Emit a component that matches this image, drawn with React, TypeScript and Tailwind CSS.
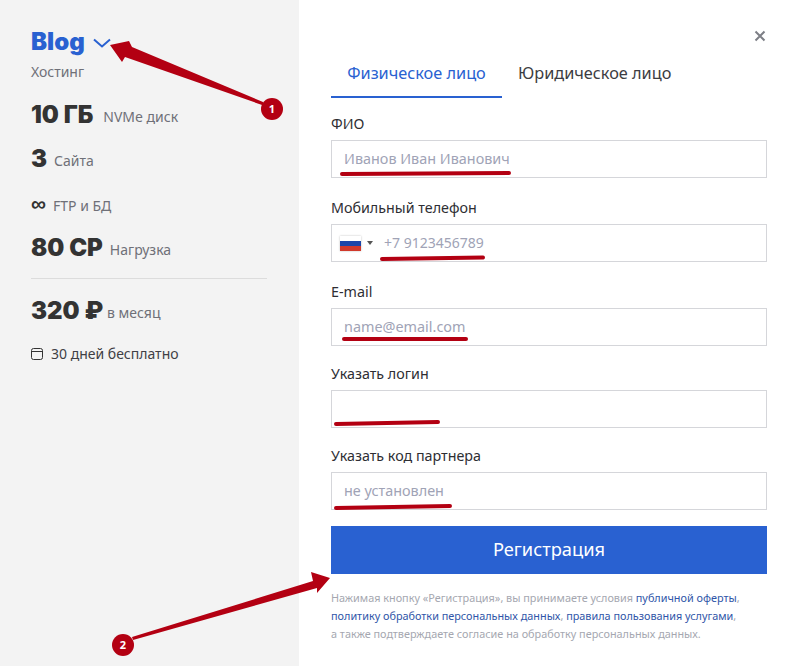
const bodyFont = "font-['Noto_Sans',sans-serif]";

function Stat({ value, label, gap = 'ml-[8px]' }: { value: string; label: string; gap?: string }) {
  return (
    <div className="flex items-baseline h-[24px]">
      <span className="font-['Inter',sans-serif] font-black text-[24px] leading-[24px] text-[#333333]">
        {value}
      </span>
      <span className={`${gap} text-[14px] leading-[20px] text-[#6f7078] -translate-y-px`}>{label}</span>
    </div>
  );
}

function Field({ label, placeholder, mt }: { label: string; placeholder?: string; mt: string }) {
  return (
    <div className={mt}>
      <label className="block text-[14.3px] leading-[20px] text-[#2e2e33]">{label}</label>
      <input
        readOnly
        placeholder={placeholder}
        className={`mt-[6px] block w-full h-[38px] border border-[#d5d6da] bg-white px-[12px] pb-[2px] text-[14.4px] outline-none placeholder:text-[#a0a3b6] ${bodyFont}`}
      />
    </div>
  );
}

function Annotations() {
  return (
    <svg className="absolute left-0 top-0 pointer-events-none" width="797" height="666" viewBox="0 0 797 666" fill="none">
      <path d="M110 45L129 41L132 47L263 102L265 106L125 57L122 62Z" fill="#b30012" />
      <path d="M330 578L311 572L313 581L132 637L133 640L317 588L317 593Z" fill="#b30012" />
      <g stroke="#b30012" strokeWidth="4" strokeLinecap="round">
        <path d="M342 174L509 173" />
        <path d="M382 259L483 257.5" />
        <path d="M344 339L466 339" />
        <path d="M336 424L438 422" />
        <path d="M336 508L450 506" />
      </g>
      <circle cx="272" cy="109" r="11" fill="#b30012" />
      <circle cx="123" cy="645" r="11" fill="#b30012" />
      <text x="272" y="113" textAnchor="middle" fill="#ffffff" fontSize="11" fontWeight="700" fontFamily="Noto Sans, sans-serif">1</text>
      <text x="123" y="649" textAnchor="middle" fill="#ffffff" fontSize="11" fontWeight="700" fontFamily="Noto Sans, sans-serif">2</text>
    </svg>
  );
}

export default function App() {
  return (
    <div className={`relative flex w-[797px] h-[666px] overflow-hidden bg-white ${bodyFont}`}>
      {/* Left column - tariff */}
      <aside className="w-[299px] shrink-0 bg-[#f3f3f3] pl-[31px] pr-[32px] pt-[27px]">
        <div className="flex items-center h-[30px]">
          <span className="font-['Inter',sans-serif] font-black text-[24px] leading-[30px] text-[#2961d1]">Blog</span>
          <svg className="ml-[8px] mt-[1px]" width="18" height="10" viewBox="0 0 18 10" fill="none">
            <path d="M1 1.5L9 8.5L17 1.5" stroke="#2961d1" strokeWidth="2" />
          </svg>
        </div>
        <div className="mt-[5px] text-[14px] leading-[20px] text-[#6f7078]">Хостинг</div>
        <div className="mt-[21px]">
          <Stat value="10 ГБ" label="NVMe диск" gap="ml-[10px]" />
        </div>
        <div className="mt-[20px]">
          <Stat value="3" label="Сайта" gap="ml-[7px]" />
        </div>
        <div className="mt-[23px] flex items-center h-[24px]">
          <span className="font-bold text-[21px] leading-[20px] text-[#333333] -mt-[6px]">∞</span>
          <span className="ml-[7px] text-[14px] leading-[20px] text-[#6f7078]">FTP и БД</span>
        </div>
        <div className="mt-[18px]">
          <Stat value="80 CP" label="Нагрузка" gap="ml-[7px]" />
        </div>
        <div className="mt-[18px] h-px w-[236px] bg-[#dcdcdc]" />
        <div className="mt-[20px]">
          <Stat value="320 ₽" label="в месяц" gap="ml-[4px]" />
        </div>
        <div className="mt-[21px] flex items-center h-[20px]">
          <svg width="13" height="13" viewBox="0 0 13 13" fill="none">
            <rect x="0.5" y="0.5" width="11" height="11" rx="2" stroke="#333333" strokeWidth="1" />
            <path d="M0.5 3.5H11.5" stroke="#333333" strokeWidth="1" />
          </svg>
          <span className="ml-[7px] text-[14px] leading-[20px] text-[#3f3f45]">30 дней бесплатно</span>
        </div>
      </aside>

      {/* Right column - form */}
      <main className="flex-1 pl-[32px] pr-[30px]">
        <div className="flex justify-end pt-[30px] h-[46px] pr-[1px]">
          <svg width="12" height="12" viewBox="0 0 12 12" fill="none">
            <path d="M1.5 1.5L10.5 10.5M10.5 1.5L1.5 10.5" stroke="#7d7f86" strokeWidth="2" />
          </svg>
        </div>
        <div className="flex">
          <button className="w-[171px] h-[52px] border-b-2 border-[#2961d1] text-[16.3px] text-[#2961d1] pt-[4px]">Физическое лицо</button>
          <button className="ml-[16px] h-[52px] text-[16.3px] text-[#3c3c42] pt-[2px]">Юридическое лицо</button>
        </div>
        <Field label="ФИО" placeholder="Иванов Иван Иванович" mt="mt-[16px]" />
        <div className="mt-[20px]">
          <label className="block text-[14.3px] leading-[20px] text-[#2e2e33]">Мобильный телефон</label>
          <div className="mt-[6px] flex items-center w-full h-[38px] border border-[#d5d6da] bg-white pl-[7px] pb-[2px]">
            <div className="w-[21px] h-[15px] flex flex-col shadow-[0_0_2px_rgba(0,0,0,0.25)] ml-[1px] mt-[2px]">
              <div className="flex-1 bg-white" />
              <div className="flex-1 bg-[#1b45a8]" />
              <div className="flex-1 bg-[#d0392b]" />
            </div>
            <div className="ml-[6px] mt-[2px] w-0 h-0 border-x-[3px] border-x-transparent border-t-[4px] border-t-[#555555]" />
            <span className="ml-[11px] text-[14px] text-[#a0a3b6]">+7 9123456789</span>
          </div>
        </div>
        <Field label="E-mail" placeholder="name@email.com" mt="mt-[20px]" />
        <Field label="Указать логин" mt="mt-[18px]" />
        <Field label="Указать код партнера" placeholder="не установлен" mt="mt-[18px]" />
        <button className="mt-[16px] w-full h-[48px] bg-[#2961d1] text-white text-[18.3px] pb-[2px]">Регистрация</button>
        <p className="mt-[15px] text-[10.85px] leading-[18px] text-[#a5a7b0] whitespace-nowrap">
          Нажимая кнопку «Регистрация», вы принимаете условия <a className="text-[#2f55a8]">публичной оферты</a>,
          <br />
          <a className="text-[#2f55a8]">политику обработки персональных данных</a>, <a className="text-[#2f55a8]">правила пользования услугами</a>,
          <br />
          а также подтверждаете согласие на обработку персональных данных.
        </p>
      </main>
      <Annotations />
    </div>
  );
}
